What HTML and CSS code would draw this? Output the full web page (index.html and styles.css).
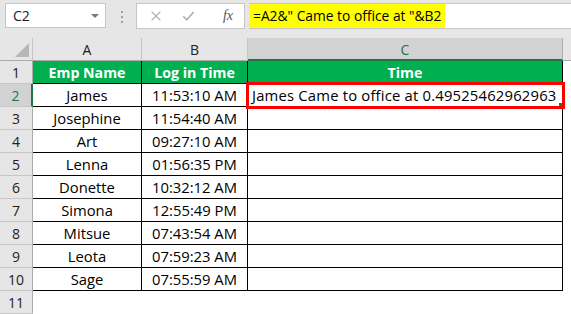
FILE: index.html
```html
<!DOCTYPE html>
<html lang="en">
<head>
  <meta charset="UTF-8" />
  <meta name="viewport" content="width=device-width, initial-scale=1.0" />
  <title>Came to office</title>
  <link rel="stylesheet" href="styles.css">
</head>
<body>
  <div class="bar">
    <div class="namebox">
      <span>C2</span>
      <span class="caret"></span>
    </div>
    <div class="grip"><i></i><i></i><i></i></div>
    <div class="tools">
      <svg width="14" height="14" viewBox="0 0 14 14"><path d="M2 2 L12 12 M12 2 L2 12" stroke="#b3b3b3" stroke-width="1.4" fill="none"/></svg>
      <svg width="15" height="14" viewBox="0 0 15 14"><path d="M1.5 7.5 L5.5 11.5 L13.5 2.5" stroke="#b3b3b3" stroke-width="2" fill="none"/></svg>
      <span class="fx">fx</span>
    </div>
    <div class="formula"><span class="hl">=A2&amp;" Came to office at "&amp;B2</span></div>
  </div>

  <div class="sheet">
    <div class="corner"><span></span></div>
    <div class="colhead">A</div>
    <div class="colhead">B</div>
    <div class="colhead sel">C</div>
    <div class="colhead rest"></div>

    <div class="rowhead">1</div>
    <div class="cell head">Emp Name</div>
    <div class="cell head">Log in Time</div>
    <div class="cell head">Time</div>
    <div class="blank"></div>

    <div class="rowhead sel">2</div>
    <div class="cell">James</div>
    <div class="cell">11:53:10 AM</div>
    <div class="cell result active">James Came to office at 0.49525462962963<span class="handle"></span></div>
    <div class="blank"></div>

    <div class="rowhead">3</div>
    <div class="cell">Josephine</div>
    <div class="cell">11:54:40 AM</div>
    <div class="cell"></div>
    <div class="blank"></div>

    <div class="rowhead">4</div>
    <div class="cell">Art</div>
    <div class="cell">09:27:10 AM</div>
    <div class="cell"></div>
    <div class="blank"></div>

    <div class="rowhead">5</div>
    <div class="cell">Lenna</div>
    <div class="cell">01:56:35 PM</div>
    <div class="cell"></div>
    <div class="blank"></div>

    <div class="rowhead">6</div>
    <div class="cell">Donette</div>
    <div class="cell">10:32:12 AM</div>
    <div class="cell"></div>
    <div class="blank"></div>

    <div class="rowhead">7</div>
    <div class="cell">Simona</div>
    <div class="cell">12:55:49 PM</div>
    <div class="cell"></div>
    <div class="blank"></div>

    <div class="rowhead">8</div>
    <div class="cell">Mitsue</div>
    <div class="cell">07:43:54 AM</div>
    <div class="cell"></div>
    <div class="blank"></div>

    <div class="rowhead">9</div>
    <div class="cell">Leota</div>
    <div class="cell">07:59:23 AM</div>
    <div class="cell"></div>
    <div class="blank"></div>

    <div class="rowhead">10</div>
    <div class="cell">Sage</div>
    <div class="cell">07:55:59 AM</div>
    <div class="cell"></div>
    <div class="blank"></div>

    <div class="rowhead">11</div>
    <div class="blank"></div>
    <div class="blank"></div>
    <div class="blank"></div>
    <div class="blank"></div>
  </div>
</body>
</html>
```

FILE: styles.css
```css
body {
  margin: 0;
  padding: 0;
  width: 571px;
  height: 314px;
  overflow: hidden;
  background: #fff;
  font-family: "Open Sans", "Liberation Sans", sans-serif;
  font-size: 14.8px;
  color: #000;
}
.bar {
  display: flex;
  align-items: flex-start;
  height: 38px;
  box-sizing: border-box;
  padding: 3px 0 0 5px;
  background: #e6e6e6;
}
.namebox {
  display: flex;
  align-items: center;
  justify-content: space-between;
  width: 101px;
  height: 25px;
  box-sizing: border-box;
  padding: 0 6px 0 7px;
  background: #fff;
  border: 1px solid #c6c6c6;
  font-size: 14px;
  color: #222;
}
.caret {
  width: 0;
  height: 0;
  border-left: 4px solid transparent;
  border-right: 4px solid transparent;
  border-top: 4px solid #7a7a7a;
}
.grip {
  display: flex;
  flex-direction: column;
  gap: 3px;
  margin: 8px 13px 0 15px;
}
.grip i {
  display: block;
  width: 2px;
  height: 2px;
  background: #a0a0a0;
}
.tools {
  display: flex;
  align-items: center;
  width: 109px;
  height: 26px;
  box-sizing: border-box;
  padding: 0 11px 0 13px;
  gap: 20px;
  background: #fff;
  border: 1px solid #c6c6c6;
}
.tools .fx {
  margin-left: 8px;
  font-family: "Liberation Serif", serif;
  font-style: italic;
  font-size: 14px;
  color: #555;
}
.formula {
  flex: 1;
  height: 26px;
  margin-left: 4px;
  box-sizing: border-box;
  background: #fff;
  border-bottom: 1px solid #c6c6c6;
  border-top: 1px solid #c6c6c6;
}
.formula .hl {
  display: inline-block;
  height: 24px;
  line-height: 24px;
  padding: 0 4px;
  width: 196px;
  box-sizing: border-box;
  background: #ffff00;
  font-size: 13.8px;
  white-space: nowrap;
}
.sheet {
  display: grid;
  grid-template-columns: 33px 109px 106px 315px 8px;
  grid-auto-rows: 23px;
}
.corner {
  position: relative;
  background: #e6e6e6;
  border-right: 1px solid #c6c6c6;
  border-bottom: 1px solid #ababab;
}
.corner span {
  position: absolute;
  right: 3px;
  bottom: 3px;
  width: 0;
  height: 0;
  border-left: 14px solid transparent;
  border-bottom: 14px solid #b7b7b7;
}
.colhead {
  box-sizing: border-box;
  background: #e6e6e6;
  border-right: 1px solid #c6c6c6;
  border-bottom: 1px solid #ababab;
  text-align: center;
  line-height: 23px;
  font-size: 14px;
  color: #222;
}
.colhead.sel {
  background: #d2d2d2;
  border-right-color: #ababab;
  border-bottom: 2px solid #217346;
  color: #217346;
}
.colhead.rest {
  border-right: none;
}
.rowhead {
  box-sizing: border-box;
  background: #e6e6e6;
  border-right: 1px solid #ababab;
  border-bottom: 1px solid #c6c6c6;
  text-align: center;
  line-height: 23px;
  font-size: 14px;
  color: #222;
}
.rowhead.sel {
  background: #d2d2d2;
  border-right: 2px solid #217346;
  color: #217346;
}
.cell {
  box-sizing: border-box;
  border-right: 1px solid #000;
  border-bottom: 1px solid #000;
  text-align: center;
  line-height: 21px;
  padding-top: 1px;
  white-space: nowrap;
  overflow: visible;
}
.cell.head {
  background: #00b050;
  color: #fff;
  font-weight: bold;
  font-size: 14.2px;
}
.cell.result {
  text-align: left;
  padding-left: 4px;
  letter-spacing: 0.2px;
}
.cell.active {
  position: relative;
  z-index: 1;
  outline: 3px solid #ff0000;
  outline-offset: -1px;
}
.handle {
  position: absolute;
  right: 0;
  bottom: 0;
  width: 3px;
  height: 3px;
  background: #217346;
}
.blank {
  background: #fff;
}
```
